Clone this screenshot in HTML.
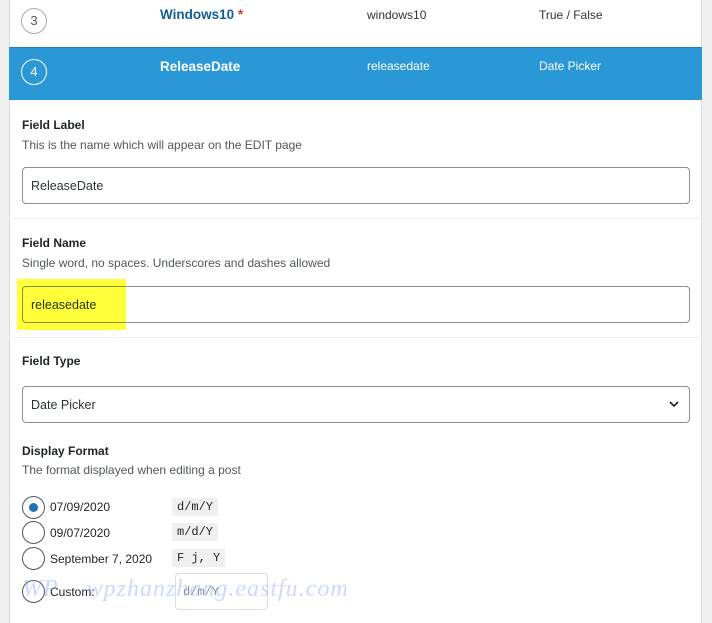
<!DOCTYPE html>
<html><head><meta charset="utf-8"><style>
*{margin:0;padding:0;box-sizing:border-box}
body{width:712px;height:623px;overflow:hidden;background:#f0f0f1;font-family:"Liberation Sans",sans-serif;color:#1d2327;position:relative}
.panel{position:absolute;left:9px;top:0;width:693px;height:623px;background:#fff;border-left:1px solid #dcdcde;border-right:1px solid #dcdcde}
.a{position:absolute;white-space:nowrap}
.circle{position:absolute;width:26px;height:26px;border-radius:50%;border:1px solid #a7aaad;text-align:center;line-height:24px;font-size:13px;color:#50575e}
.lbl{font-size:12px;font-weight:bold;color:#1d2327}
.desc{font-size:12px;color:#50575e}
.inp{position:absolute;left:22px;width:668px;height:37px;border:1px solid #8c8f94;border-radius:4px;font-size:12.5px;padding-left:8px;line-height:37px;color:#2c3338}
.sep{position:absolute;left:9px;width:693px;height:1px;background:#f0f0f1}
.radio{position:absolute;left:22px;width:23px;height:23px;border-radius:50%;border:1px solid #50575e;background:#fff}
.code{position:absolute;left:172px;background:#f0f0f1;font-family:"Liberation Mono",monospace;font-size:12px;padding:2px 5px;color:#1d2327}
.rt{position:absolute;left:50px;font-size:12px;color:#1d2327}
</style></head><body>
<div class="panel"></div>
<div class="circle" style="left:21px;top:8px">3</div>
<div class="a" style="left:160px;top:7px;font-size:13.5px;font-weight:bold;color:#135e96">Windows10 <span style="color:#d63638">*</span></div>
<div class="a" style="left:367px;top:8px;font-size:12px;color:#2c3338">windows10</div>
<div class="a" style="left:539px;top:8px;font-size:12px;color:#2c3338">True / False</div>
<div class="a" style="left:9px;top:47px;width:693px;height:53px;background:#2a98d6;border-top:1px solid #1f7fb8"></div>
<div class="circle" style="left:21px;top:59px;border-color:#fff;color:#fff">4</div>
<div class="a" style="left:160px;top:59px;font-size:13.5px;font-weight:bold;color:#fff">ReleaseDate</div>
<div class="a" style="left:367px;top:59px;font-size:12px;color:#fff">releasedate</div>
<div class="a" style="left:539px;top:59px;font-size:12px;color:#fff">Date Picker</div>

<div class="a lbl" style="left:22px;top:118px">Field Label</div>
<div class="a desc" style="left:22px;top:138px">This is the name which will appear on the EDIT page</div>
<div class="inp" style="top:167px">ReleaseDate</div>
<div class="sep" style="top:218px"></div>

<div class="a lbl" style="left:22px;top:236px">Field Name</div>
<div class="a desc" style="left:22px;top:256px">Single word, no spaces. Underscores and dashes allowed</div>
<div class="inp" style="top:286px">releasedate</div>
<div class="a" style="left:17px;top:279px;width:109px;height:51px;background:#ffff3a;mix-blend-mode:multiply"></div>
<div class="sep" style="top:337px"></div>

<div class="a lbl" style="left:22px;top:354px">Field Type</div>
<div class="inp" style="top:386px">Date Picker</div>
<svg class="a" style="left:668px;top:399px" width="12" height="10" viewBox="0 0 12 10"><path d="M2 3 L6 7 L10 3" fill="none" stroke="#1d2327" stroke-width="1.6"/></svg>

<div class="a lbl" style="left:22px;top:444px">Display Format</div>
<div class="a desc" style="left:22px;top:463px">The format displayed when editing a post</div>

<div class="radio" style="top:496px"></div>
<div class="a" style="left:29px;top:503px;width:9px;height:9px;border-radius:50%;background:#2271b1"></div>
<div class="rt" style="top:500px">07/09/2020</div><div class="code" style="top:498px">d/m/Y</div>
<div class="radio" style="top:521px"></div>
<div class="rt" style="top:526px">09/07/2020</div><div class="code" style="top:523px">m/d/Y</div>
<div class="radio" style="top:547px"></div>
<div class="rt" style="top:552px">September 7, 2020</div><div class="code" style="top:549px">F j, Y</div>
<div class="radio" style="top:580px"></div>
<div class="rt" style="top:585px">Custom:</div>
<div class="a" style="left:175px;top:573px;width:93px;height:37px;border:1px solid #dcdcde;border-radius:4px;background:#fff"></div>
<div class="a" style="left:183px;top:585px;font-family:'Liberation Mono',monospace;font-size:12px;color:#8c8f94">d/m/Y</div>
<div class="a" style="left:22px;top:576px;font-family:'Liberation Serif',serif;font-style:italic;font-size:24px;color:rgba(120,140,255,.35);letter-spacing:1px">WP&nbsp;&nbsp;&nbsp; wpzhanzhang.eastfu.com</div>
</body></html>
